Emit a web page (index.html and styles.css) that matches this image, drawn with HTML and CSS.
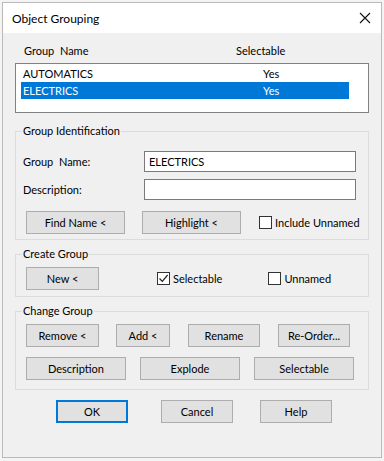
FILE: index.html
```
<!DOCTYPE html>
<html>
<head>
<meta charset="utf-8">
<link rel="stylesheet" href="styles.css">
</head>
<body>
<div class="window">
  <div class="titlebar">
    <span class="title">Object Grouping</span>
    <svg class="close" width="12" height="12" viewBox="0 0 12 12"><path d="M1 1L11 11M11 1L1 11" stroke="#111" stroke-width="1.1" fill="none"/></svg>
  </div>
  <div class="content">
    <div class="list-header">
      <span class="col-name">Group&nbsp; Name</span>
      <span class="col-sel">Selectable</span>
    </div>
    <div class="listbox">
      <div class="row"><span class="cell-name">AUTOMATICS</span><span class="cell-sel">Yes</span></div>
      <div class="row selected"><span class="cell-name">ELECTRICS</span><span class="cell-sel">Yes</span></div>
    </div>

    <fieldset class="group g-ident">
      <legend>Group Identification</legend>
      <div class="form">
        <label class="flabel">Group&nbsp; Name:</label>
        <div class="input">ELECTRICS</div>
        <label class="flabel">Description:</label>
        <div class="input"></div>
      </div>
      <div class="btnrow r-ident">
        <button class="btn w99">Find Name &lt;</button>
        <button class="btn w99">Highlight &lt;</button>
        <span class="check"><span class="box"></span>Include Unnamed</span>
      </div>
    </fieldset>

    <fieldset class="group g-create">
      <legend>Create Group</legend>
      <div class="btnrow r-create">
        <button class="btn w73">New &lt;</button>
        <span class="check c-sel"><span class="box"><svg width="11" height="11" viewBox="0 0 11 11"><path d="M1.5 5.5L4.3 8.4L9.6 2" stroke="#222" stroke-width="1.2" fill="none"/></svg></span>Selectable</span>
        <span class="check c-unn"><span class="box"></span>Unnamed</span>
      </div>
    </fieldset>

    <fieldset class="group g-change">
      <legend>Change Group</legend>
      <div class="btnrow r-change1">
        <button class="btn w73">Remove &lt;</button>
        <button class="btn w54">Add &lt;</button>
        <button class="btn w72">Rename</button>
        <button class="btn w72">Re-Order...</button>
      </div>
      <div class="btnrow r-change2">
        <button class="btn w100">Description</button>
        <button class="btn w100">Explode</button>
        <button class="btn w100">Selectable</button>
      </div>
    </fieldset>

    <div class="btnrow r-bottom">
      <button class="btn w72 default">OK</button>
      <button class="btn w72">Cancel</button>
      <button class="btn w72">Help</button>
    </div>
  </div>
</div>
</body>
</html>
```
FILE: styles.css
```
* { box-sizing: border-box; }
html, body { margin: 0; padding: 0; }
body {
  width: 384px;
  height: 461px;
  background: #f4f4f4;
  font-family: Lato, "Noto Sans", "Liberation Sans", sans-serif;
  font-size: 11px;
  color: #000;
  padding: 2px 0 0 2px;
}
.window {
  width: 380px;
  height: 456px;
  border: 1px solid #b9b9b9;
  background: #f0f0f0;
}
.titlebar {
  height: 30px;
  background: #fff;
  display: flex;
  align-items: center;
  justify-content: space-between;
  padding: 0 10px 0 9px;
}
.title { font-size: 12px; }
.close { display: block; }
.content { padding: 0 12px; }
.list-header {
  margin-top: 11px;
  height: 14px;
  line-height: 14px;
  display: flex;
}
.col-name { padding-left: 9px; width: 221px; }
.listbox {
  margin-top: 5px;
  height: 50px;
  border: 1px solid #828282;
  background: #fff;
  padding: 1px 0 0 5px;
}
.row {
  width: 328px;
  height: 17px;
  line-height: 17px;
  display: flex;
  padding-left: 2px;
}
.row .cell-name { width: 240px; }
.row.selected { background: #0078d7; color: #fff; }
.group {
  margin: 0;
  border: 1px solid #dcdcdc;
  padding: 0 0 0 10px;
}
.group legend {
  padding: 0 1px;
  margin-left: -4px;
  line-height: 14px;
  height: 14px;
}
.g-ident { margin-top: 11px; padding-bottom: 5px; }
.g-create { margin-top: 7px; padding-bottom: 6px; }
.g-change { margin-top: 7px; padding-bottom: 9px; }
.form {
  display: grid;
  grid-template-columns: 121px 212px;
  row-gap: 7px;
  margin-top: 13px;
  margin-left: -3px;
  align-items: center;
}
.input {
  height: 21px;
  border: 1px solid #7a7a7a;
  background: #fff;
  line-height: 19px;
  padding-left: 4px;
}
.btnrow { display: flex; align-items: center; }
.btn {
  height: 23px;
  background: #e1e1e1;
  border: 1px solid #adadad;
  font-family: inherit;
  font-size: 11px;
  color: #000;
  padding: 0;
  margin: 0;
}
.w54 { width: 54px; }
.w72 { width: 72px; }
.w73 { width: 73px; }
.w99 { width: 99px; }
.w100 { width: 100px; }
.btn.default { border: 2px solid #0078d7; }
.r-ident { margin-top: 11px; gap: 17px; }
.r-ident .check { margin-left: 1px; }
.r-create { margin-top: 6px; }
.r-create .c-sel { margin-left: 58px; }
.r-create .c-unn { margin-left: 46px; }
.r-change1 { margin-top: 6px; gap: 17px; }
.r-change1 .btn + .btn + .btn, .r-change1 .btn + .btn + .btn + .btn { margin-left: 1px; }
.r-change2 { margin-top: 10px; gap: 14px; }
.r-bottom { margin-top: 10px; padding-left: 41px; }
.r-bottom .btn + .btn { margin-left: 33px; }
.r-bottom .btn + .btn + .btn { margin-left: 27px; }
.check { display: inline-flex; align-items: center; }
.box {
  width: 13px;
  height: 13px;
  border: 1px solid #333;
  background: #fff;
  margin-right: 3px;
  display: inline-flex;
  align-items: center;
  justify-content: center;
}
.box svg { display: block; }
```
